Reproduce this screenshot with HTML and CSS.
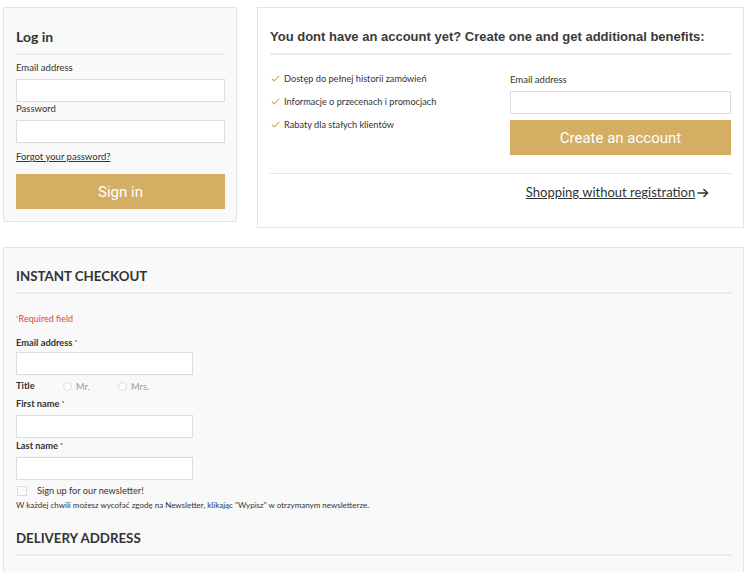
FILE: index.html
```html
<!DOCTYPE html>
<html lang="en">
<head>
<meta charset="utf-8">
<title>Log in</title>
<link rel="stylesheet" href="styles.css">
</head>
<body>
<div class="page">
  <div class="top-row">
    <section class="box login">
      <h2 class="box-title">Log in</h2>
      <label class="lbl">Email address</label>
      <input class="field" type="text">
      <label class="lbl lbl-tight">Password</label>
      <input class="field" type="password">
      <a class="forgot" href="#">Forgot your password?</a>
      <button class="btn">Sign in</button>
    </section>
    <section class="box register">
      <h2 class="box-title reg-title">You dont have an account yet? Create one and get additional benefits:</h2>
      <div class="reg-row">
        <ul class="benefits">
          <li><span class="tick"><svg width="9" height="7" viewBox="0 0 9 7"><path d="M0.8 3.6 L3.2 5.8 L8.2 0.8" fill="none" stroke="#d4ae63" stroke-width="1.2"/></svg></span>Dostęp do pełnej historii zamówień</li>
          <li><span class="tick"><svg width="9" height="7" viewBox="0 0 9 7"><path d="M0.8 3.6 L3.2 5.8 L8.2 0.8" fill="none" stroke="#d4ae63" stroke-width="1.2"/></svg></span>Informacje o przecenach i promocjach</li>
          <li><span class="tick"><svg width="9" height="7" viewBox="0 0 9 7"><path d="M0.8 3.6 L3.2 5.8 L8.2 0.8" fill="none" stroke="#d4ae63" stroke-width="1.2"/></svg></span>Rabaty dla stałych klientów</li>
        </ul>
        <div class="reg-form">
          <label class="lbl">Email address</label>
          <input class="field" type="text">
          <button class="btn btn-create">Create an account</button>
        </div>
      </div>
      <div class="reg-bottom">
        <div></div>
        <div class="guest-wrap">
          <a class="guest" href="#">Shopping without registration</a>
          <svg class="arrow" width="12" height="10" viewBox="0 0 12 10"><path d="M0.5 5 H10.5 M6.5 1 L10.5 5 L6.5 9" fill="none" stroke="#333" stroke-width="1.5"/></svg>
        </div>
      </div>
    </section>
  </div>

  <section class="box checkout">
    <h2 class="box-title upper">INSTANT CHECKOUT</h2>
    <p class="required"><sup>*</sup>Required field</p>
    <label class="blbl first">Email address <sup>*</sup></label>
    <input class="field small tight" type="text">
    <div class="title-row">
      <span class="blbl">Title</span>
      <span class="radio-opt"><span class="radio"></span>Mr.</span>
      <span class="radio-opt"><span class="radio"></span>Mrs.</span>
    </div>
    <label class="blbl">First name <sup>*</sup></label>
    <input class="field small" type="text">
    <label class="blbl">Last name <sup>*</sup></label>
    <input class="field small" type="text">
    <div class="news-row"><span class="check"></span>Sign up for our newsletter!</div>
    <p class="note">W każdej chwili możesz wycofać zgodę na Newsletter, klikając "Wypisz" w otrzymanym newsletterze.</p>
    <h2 class="box-title upper delivery">DELIVERY ADDRESS</h2>
  </section>
</div>
</body>
</html>
```
FILE: styles.css
```css
* { box-sizing: border-box; }
html, body { margin: 0; padding: 0; background: #fff; }
body { font-family: Lato, "Open Sans", sans-serif; color: #333; }
.page { padding: 7px 6px 0 3px; }
.top-row { display: flex; align-items: flex-start; gap: 20px; }

.box { border: 1px solid #e3e3e3; background: #f9f9f9; padding: 0 11px 0 12px; }
.login { width: 234px; padding-top: 19px; padding-bottom: 12px; display: flex; flex-direction: column; }
.register { width: 487px; background: #fff; padding-top: 19px; padding-bottom: 26px; }

.box-title { margin: 0; font-size: 14px; line-height: 20px; font-weight: 700; color: #333; padding-bottom: 6px; border-bottom: 2px solid #ececec; }
.reg-title { font-family: "Liberation Sans", Arial, sans-serif; font-size: 13px; color: #3a3a3a; }

.lbl { display: block; font-size: 9.5px; line-height: 14px; color: #333; margin-top: 6px; }
.lbl-tight { margin-top: 0; }
.field { display: block; width: 100%; height: 23px; margin: 4px 0 0; border: 1px solid #dcdcdc; background: #fff; padding: 0 6px; outline: none; }
.forgot { display: block; margin-top: 7px; font-size: 9.5px; line-height: 14px; color: #333; text-decoration: underline; }
.btn { display: block; width: 100%; height: 35px; border: 0; background: #d4ae63; color: #fff; font-family: Roboto, "Liberation Sans", sans-serif; font-size: 15px; margin-top: 10px; cursor: pointer; }

.reg-row { display: grid; grid-template-columns: 240px 221px; margin-top: 12px; }
.benefits { list-style: none; margin: 0; padding: 0; }
.benefits li { font-size: 9.2px; line-height: 23px; color: #333; display: flex; align-items: center; }
.tick { display: inline-flex; width: 13px; margin-left: 1px; }
.reg-form { padding-top: 6px; }
.reg-form .lbl { margin-top: 0; }
.btn-create { margin-top: 6px; }
.reg-bottom { display: grid; grid-template-columns: 240px 221px; margin-top: 18px; border-top: 1px solid #e6e6e6; padding-top: 9px; }
.guest-wrap { display: flex; align-items: center; justify-content: center; padding-right: 6px; }
.guest { font-size: 13px; line-height: 18px; color: #333; text-decoration: underline; }
.arrow { margin-left: 2px; margin-top: 2px; }

.checkout { margin-top: 19px; width: 741px; padding-top: 18px; padding-right: 11px; padding-bottom: 40px; }
.upper { font-size: 13.3px; }
.required { margin: 19px 0 0; font-size: 9px; line-height: 12px; color: #e8413b; }
.required sup, .blbl sup { font-size: 6px; vertical-align: top; position: relative; top: -1px; }
.blbl { display: block; font-size: 9.3px; font-weight: 700; line-height: 14px; color: #333; margin-top: 1px; }
.blbl.first { margin-top: 11px; }
.field.small { width: 177px; height: 23px; margin-top: 4px; }
.field.small.tight { margin-top: 2px; }
.title-row { display: flex; align-items: center; height: 14px; margin-top: 4px; }
.title-row .blbl { margin: 0; width: 47px; }
.radio-opt { display: flex; align-items: center; width: 55px; font-size: 9.3px; color: #999; }
.radio { width: 9px; height: 9px; border: 1px solid #ddd; border-radius: 50%; background: #fff; margin-right: 4px; }
.title-row + .blbl { margin-top: 4px; }
.news-row { display: flex; align-items: center; font-size: 9.2px; line-height: 14px; color: #333; margin-top: 4px; }
.check { width: 10px; height: 10px; border: 1px solid #ddd; background: #fafafa; margin: 0 10px 0 1px; }
.note { margin: 1px 0 0; font-size: 8px; line-height: 12px; color: #333; }
.delivery { margin-top: 17px; }
```
